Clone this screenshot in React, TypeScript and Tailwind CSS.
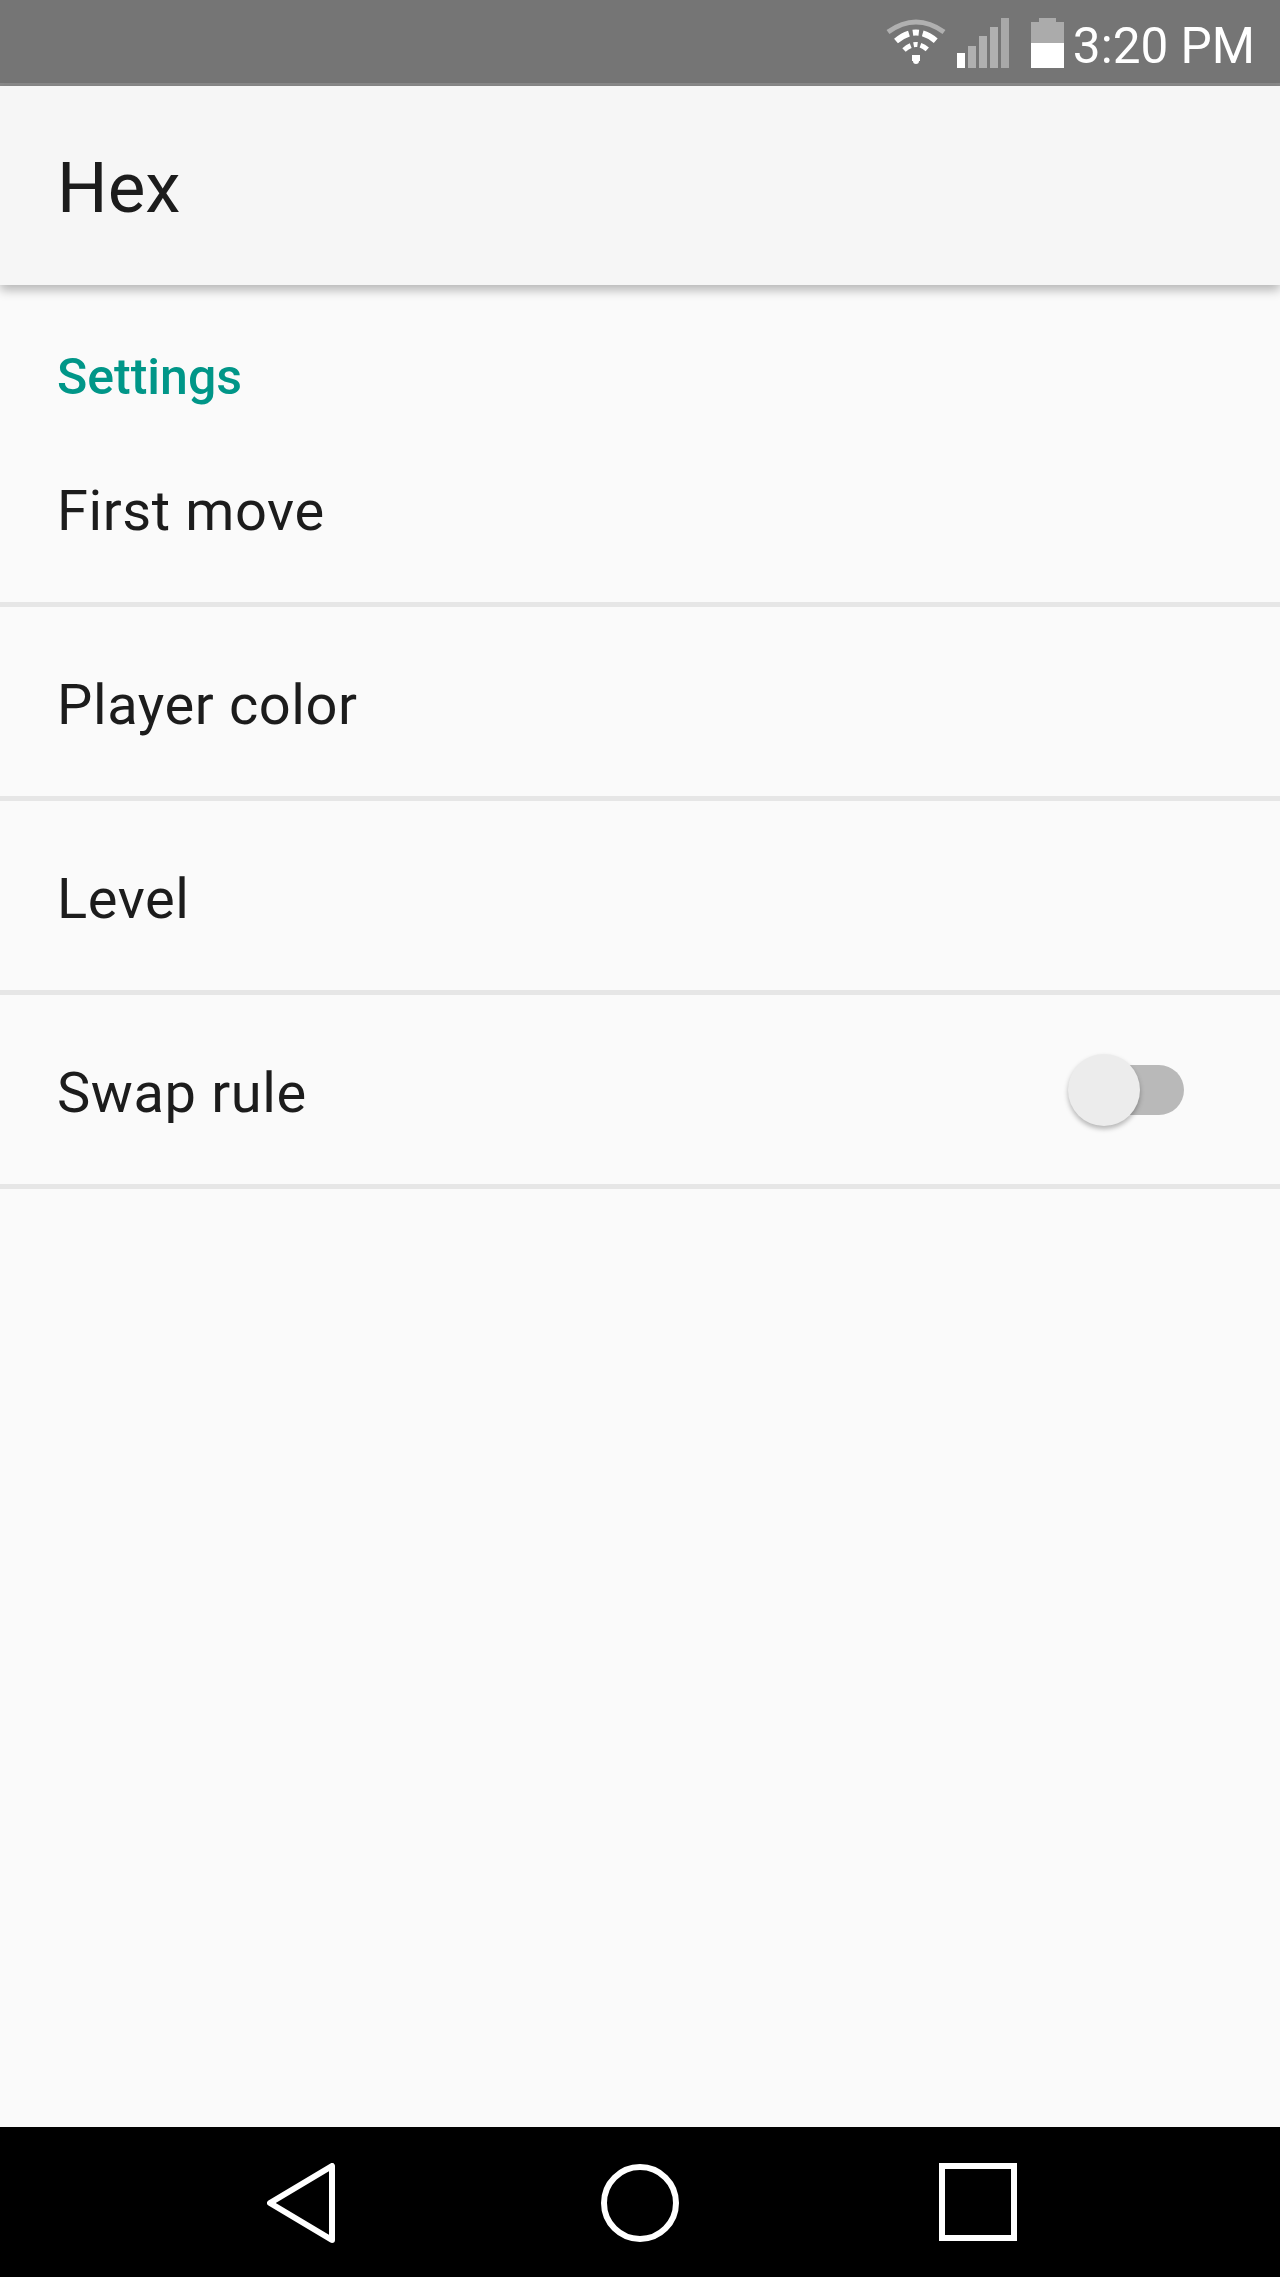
const font = { fontFamily: 'Roboto, sans-serif' }

function StatusIcons() {
  return (
    <div className="flex items-start gap-[11px] pt-[18px] blur-[0.6px]">
      <svg width="60" height="46" viewBox="0 0 60 46" fill="none">
        <path d="M2 14 Q30 -6 58 14" stroke="#b0b0b0" strokeWidth="5" />
        <path d="M10 23 Q30 6 50 23" stroke="#ffffff" strokeWidth="6" strokeDasharray="15 4 6 4 15" />
        <path d="M18 32 Q30 21 42 32" stroke="#ffffff" strokeWidth="5" strokeDasharray="8 3 4 3 8" />
        <path d="M26 40 H34" stroke="#ffffff" strokeWidth="6" />
        <circle cx="30" cy="43" r="3" fill="#ffffff" />
      </svg>
      <div className="flex items-end gap-[3px] h-[50px]">
        <div className="w-[8px] h-[15px] bg-white" />
        <div className="w-[8px] h-[22px] bg-[#b0b0b0]" />
        <div className="w-[8px] h-[32px] bg-[#b0b0b0]" />
        <div className="w-[8px] h-[41px] bg-[#b0b0b0]" />
        <div className="w-[8px] h-[50px] bg-[#a8a8a8]" />
      </div>
      <div className="flex flex-col items-center w-[33px] h-[50px] ml-[11px]">
        <div className="w-[17px] h-[4px] bg-[#ababab]" />
        <div className="w-[33px] h-[21px] bg-[#ababab]" />
        <div className="w-[33px] h-[25px] bg-white" />
      </div>
    </div>
  )
}

function Row({ label, toggle }: { label: string; toggle?: boolean }) {
  return (
    <div className="h-[194px] box-border border-b-[5px] border-[#e6e6e6] flex items-center justify-between pl-[57px] pr-[96px]">
      <span className="text-[56px] tracking-[0.6px] leading-none mt-[6px] text-[#1c1c1c] blur-[0.6px]">{label}</span>
      {toggle && (
        <div className="relative w-[116px] h-[72px] flex items-center justify-end">
          <div className="w-[100px] h-[50px] rounded-full bg-[#b9b9b9]" />
          <div className="absolute left-0 top-0 w-[72px] h-[72px] rounded-full bg-[#ececec] shadow-[0_3px_5px_rgba(0,0,0,0.28)]" />
        </div>
      )}
    </div>
  )
}

export default function App() {
  return (
    <div className="h-[2277px] w-[1280px] flex flex-col bg-[#fafafa] overflow-hidden" style={font}>
      <div className="h-[86px] shrink-0 box-border bg-[#757575] border-b-[3px] border-[#8a8a8a] flex justify-end pr-[25px]">
        <StatusIcons />
        <span className="text-[49.5px] leading-none text-white ml-[9px] pt-[22px] blur-[0.6px]">3:20 PM</span>
      </div>
      <div className="relative h-[199px] shrink-0 bg-[#f6f6f6] flex items-center pl-[57px] shadow-[0_5px_10px_rgba(0,0,0,0.28)]">
        <span className="text-[71px] leading-none mt-[3px] text-[#1c1c1c] blur-[0.6px]">Hex</span>
      </div>
      <div className="h-[128px] shrink-0 flex items-end pl-[57px] pb-[11px]">
        <span className="text-[50px] leading-none font-medium text-[#009688] blur-[0.6px]">Settings</span>
      </div>
      <Row label="First move" />
      <Row label="Player color" />
      <Row label="Level" />
      <Row label="Swap rule" toggle />
      <div className="flex-1" />
      <div className="h-[150px] shrink-0 bg-black flex items-start pt-[36px] pl-[265px]">
        <svg width="72" height="80" viewBox="0 0 72 80" fill="none" className="blur-[0.6px]">
          <path d="M67 3 V77 L5 40 Z" stroke="#fff" strokeWidth="6" strokeLinejoin="round" />
        </svg>
        <svg width="80" height="80" viewBox="0 0 80 80" fill="none" className="ml-[263px] blur-[0.6px]">
          <circle cx="40" cy="40" r="36" stroke="#fff" strokeWidth="6" />
        </svg>
        <svg width="78" height="78" viewBox="0 0 78 78" fill="none" className="ml-[259px] blur-[0.6px]">
          <rect x="3" y="3" width="72" height="72" stroke="#fff" strokeWidth="6" />
        </svg>
      </div>
    </div>
  )
}
